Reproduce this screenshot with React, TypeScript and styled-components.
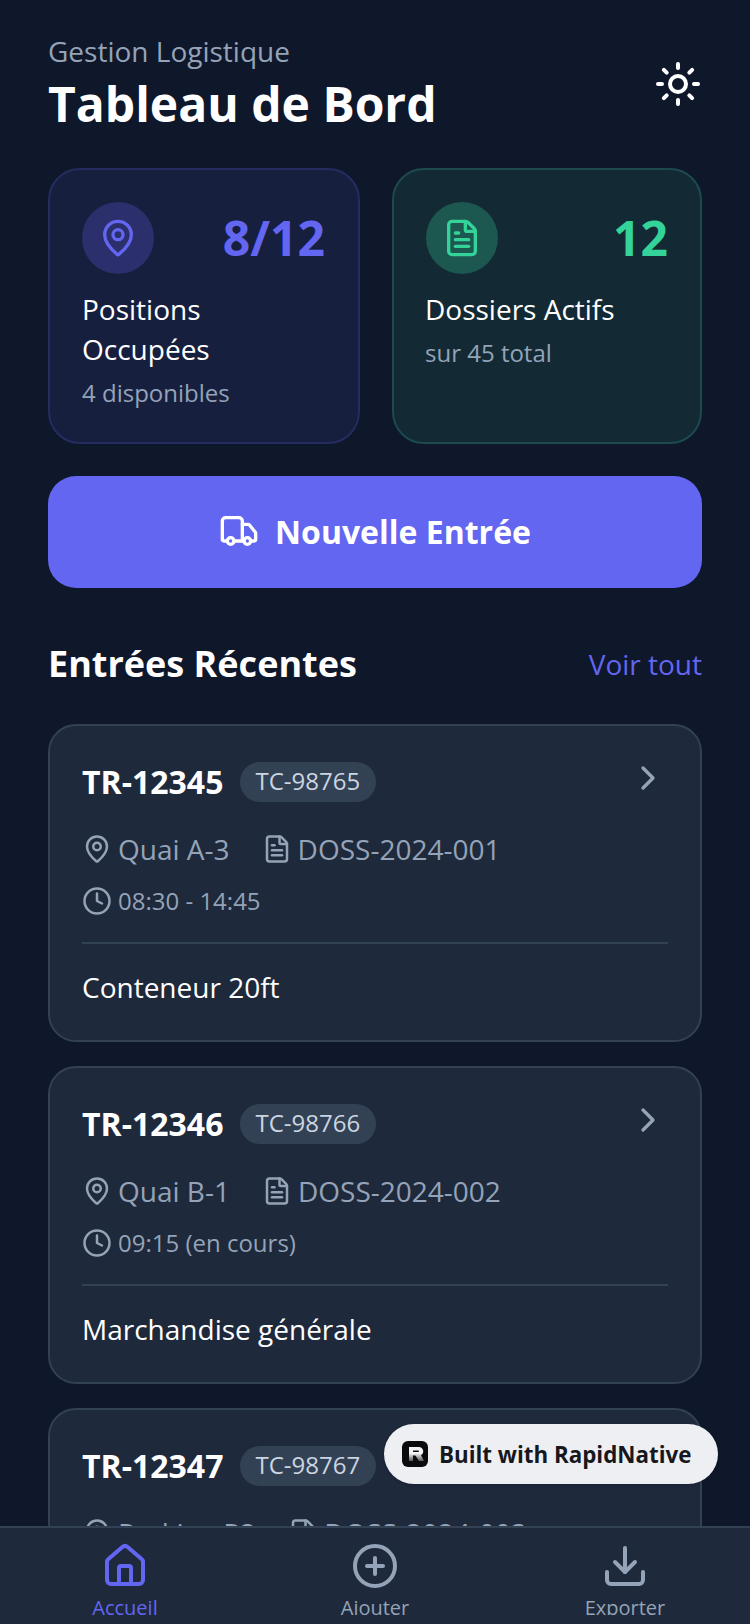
import React from 'react';
import styled, { createGlobalStyle } from 'styled-components';
import { ChevronRight, CirclePlus, Clock, Download, FileText, House, MapPin, Sun, Truck } from 'lucide-react';

type Entry = {
  truck: string,
  container: string,
  place: string,
  file: string,
  time: string,
  cargo: string,
}

const entries: Entry[] = [
  { truck: 'TR-12345', container: 'TC-98765', place: 'Quai A-3', file: 'DOSS-2024-001', time: '08:30 - 14:45', cargo: 'Conteneur 20ft' },
  { truck: 'TR-12346', container: 'TC-98766', place: 'Quai B-1', file: 'DOSS-2024-002', time: '09:15 (en cours)', cargo: 'Marchandise générale' },
  { truck: 'TR-12347', container: 'TC-98767', place: 'Parking P2', file: 'DOSS-2024-003', time: '10:00 (en cours)', cargo: 'Conteneur 40ft' },
];

const GlobalStyle = createGlobalStyle`
  html, body {
    margin: 0;
    padding: 0;
    background: #0f172a;
  }
  * {
    box-sizing: border-box;
  }
`;

const Screen = styled.div`
  position: relative;
  display: flex;
  flex-direction: column;
  width: 750px;
  height: 1624px;
  overflow: hidden;
  background: #0f172a;
  color: #fff;
  font-family: "Open Sans", "Noto Sans", sans-serif;
`;

const Content = styled.div`
  flex: 1;
  min-height: 0;
  overflow: hidden;
  padding: 31px 48px 0;
`;

const Header = styled.div`
  display: flex;
  justify-content: space-between;
  align-items: center;
  margin-bottom: 32px;
`;

const Subtitle = styled.div`
  margin-bottom: 1px;
  font-size: 28px;
  line-height: 40px;
  color: #94a3b8;
`;

const Title = styled.h1`
  margin: 0;
  font-size: 48px;
  line-height: 64px;
  font-weight: 700;
`;

const Stats = styled.div`
  display: grid;
  grid-template-columns: 312px 310px;
  gap: 32px;
  margin-bottom: 32px;
`;

const StatCard = styled.div<{ $tone: 'indigo' | 'green' }>`
  height: 276px;
  padding: 32px;
  padding-left: ${props => props.$tone === 'indigo' ? 32 : 31}px;
  border-radius: 32px;
  border: 2px solid ${props => props.$tone === 'indigo' ? '#262c5f' : '#1c4a4e'};
  background: ${props => props.$tone === 'indigo' ? '#171f3f' : '#132a35'};
`;

const StatTop = styled.div`
  display: flex;
  justify-content: space-between;
  align-items: center;
  margin-bottom: 15px;
`;

const StatIcon = styled.div<{ $tone: 'indigo' | 'green' }>`
  display: flex;
  align-items: center;
  justify-content: center;
  width: 72px;
  height: 72px;
  margin-left: ${props => props.$tone === 'indigo' ? 0 : 1}px;
  border-radius: 50%;
  background: ${props => props.$tone === 'indigo' ? '#2b2f6b' : '#1c5750'};
  color: ${props => props.$tone === 'indigo' ? '#6366f1' : '#34d399'};
`;

const StatValue = styled.div<{ $tone: 'indigo' | 'green' }>`
  margin-right: ${props => props.$tone === 'indigo' ? 1 : 0}px;
  font-size: 48px;
  line-height: 64px;
  font-weight: 700;
  color: ${props => props.$tone === 'indigo' ? '#6366f1' : '#34d399'};
`;

const StatLabel = styled.div`
  font-size: 28px;
  line-height: 40px;
`;

const StatNote = styled.div`
  margin-top: 8px;
  font-size: 24px;
  line-height: 32px;
  color: #94a3b8;
`;

const PrimaryButton = styled.button`
  display: flex;
  align-items: center;
  justify-content: center;
  gap: 16px;
  width: 100%;
  height: 112px;
  margin-bottom: 48px;
  padding: 0 0 2px;
  border: 0;
  border-radius: 28px;
  background: #6366f1;
  color: #fff;
  font-family: inherit;
  font-size: 32px;
  font-weight: 700;
`;

const SectionHead = styled.div`
  display: flex;
  justify-content: space-between;
  align-items: center;
  margin-bottom: 32px;
`;

const SectionTitle = styled.h2`
  margin: 0;
  font-size: 36px;
  line-height: 56px;
  font-weight: 700;
`;

const SeeAll = styled.span`
  font-size: 28px;
  line-height: 40px;
  color: #6366f1;
`;

const EntryList = styled.div`
  display: flex;
  flex-direction: column;
  gap: 24px;
`;

const EntryCard = styled.div`
  height: 318px;
  padding: 32px;
  border: 2px solid #334155;
  border-radius: 28px;
  background: #1e293b;
`;

const EntryTop = styled.div`
  display: flex;
  justify-content: space-between;
  align-items: flex-start;
  margin-bottom: 23px;
`;

const EntryIds = styled.div`
  display: flex;
  align-items: center;
  gap: 17px;
  height: 48px;
`;

const TruckId = styled.span`
  font-size: 32px;
  line-height: 44px;
  font-weight: 700;
`;

const ContainerTag = styled.span`
  padding: 0 16px 0 15px;
  height: 40px;
  border-radius: 20px;
  background: #334155;
  font-size: 24px;
  line-height: 38px;
  color: #cbd5e1;
`;

const Chevron = styled.div`
  display: flex;
  color: #94a3b8;
`;

const MetaRow = styled.div`
  display: flex;
  align-items: center;
  gap: 32px;
  margin-bottom: 12px;
`;

const MetaItem = styled.div<{ $small?: boolean }>`
  display: flex;
  align-items: center;
  gap: 6px;
  font-size: ${props => props.$small ? 24 : 28}px;
  line-height: 40px;
  color: #94a3b8;
`;

const CardFooter = styled.div`
  margin-top: 21px;
  padding-top: 23px;
  border-top: 2px solid #334155;
  font-size: 28px;
  line-height: 40px;
`;

const TabBar = styled.nav`
  display: grid;
  grid-template-columns: repeat(3, 1fr);
  flex: none;
  height: 98px;
  padding-top: 14px;
  background: #1e293b;
  border-top: 2px solid #334155;
`;

const Tab = styled.div<{ $active?: boolean }>`
  display: flex;
  flex-direction: column;
  align-items: center;
  height: 73px;
  overflow: hidden;
  color: ${props => props.$active ? '#6366f1' : '#94a3b8'};
  font-size: 20px;
  line-height: 28px;

  & svg {
    flex: none;
  }
`;

const TabLabel = styled.span`
  margin-top: 4px;
`;

const BuiltBadge = styled.div`
  position: absolute;
  left: 384px;
  top: 1424px;
  display: flex;
  align-items: center;
  gap: 11px;
  width: 334px;
  height: 60px;
  padding-left: 18px;
  border-radius: 30px;
  background: #eeeff2;
  color: #16181d;
  font-size: 22.35px;
  font-weight: 700;
  box-shadow: 0 1px 3px rgba(15, 23, 42, 0.4);
`;

const BadgeLogo = styled.svg`
  flex: none;
`;

const App = () => {
  return (
    <Screen>
      <GlobalStyle />
      <Content>
        <Header>
          <div>
            <Subtitle>Gestion Logistique</Subtitle>
            <Title>Tableau de Bord</Title>
          </div>
          <Sun size={48} color="#fff" strokeWidth={2} />
        </Header>
        <Stats>
          <StatCard $tone="indigo">
            <StatTop>
              <StatIcon $tone="indigo"><MapPin size={40} strokeWidth={2} /></StatIcon>
              <StatValue $tone="indigo">8/12</StatValue>
            </StatTop>
            <StatLabel>Positions Occupées</StatLabel>
            <StatNote>4 disponibles</StatNote>
          </StatCard>
          <StatCard $tone="green">
            <StatTop>
              <StatIcon $tone="green"><FileText size={40} strokeWidth={2} /></StatIcon>
              <StatValue $tone="green">12</StatValue>
            </StatTop>
            <StatLabel>Dossiers Actifs</StatLabel>
            <StatNote>sur 45 total</StatNote>
          </StatCard>
        </Stats>
        <PrimaryButton>
          <Truck size={40} strokeWidth={2} />
          Nouvelle Entrée
        </PrimaryButton>
        <SectionHead>
          <SectionTitle>Entrées Récentes</SectionTitle>
          <SeeAll>Voir tout</SeeAll>
        </SectionHead>
        <EntryList>
          {entries.map(entry => (
            <EntryCard key={entry.truck}>
              <EntryTop>
                <EntryIds>
                  <TruckId>{entry.truck}</TruckId>
                  <ContainerTag>{entry.container}</ContainerTag>
                </EntryIds>
                <Chevron><ChevronRight size={40} strokeWidth={2} /></Chevron>
              </EntryTop>
              <MetaRow>
                <MetaItem><MapPin size={30} strokeWidth={2} />{entry.place}</MetaItem>
                <MetaItem><FileText size={30} strokeWidth={2} />{entry.file}</MetaItem>
              </MetaRow>
              <MetaRow>
                <MetaItem $small><Clock size={30} strokeWidth={2} />{entry.time}</MetaItem>
              </MetaRow>
              <CardFooter>{entry.cargo}</CardFooter>
            </EntryCard>
          ))}
        </EntryList>
      </Content>
      <TabBar>
        <Tab $active><House size={48} strokeWidth={2} /><TabLabel>Accueil</TabLabel></Tab>
        <Tab><CirclePlus size={48} strokeWidth={2} /><TabLabel>Ajouter</TabLabel></Tab>
        <Tab><Download size={48} strokeWidth={2} /><TabLabel>Exporter</TabLabel></Tab>
      </TabBar>
      <BuiltBadge>
        <BadgeLogo width="26" height="26" viewBox="0 0 26 26">
          <defs>
            <linearGradient id="badge-r" x1="0" y1="0" x2="0" y2="1">
              <stop offset="0.45" stopColor="#f4f4f6" />
              <stop offset="1" stopColor="#55555a" />
            </linearGradient>
          </defs>
          <rect width="26" height="26" rx="6" fill="#0b0b0d" />
          <path d="M7 6h10a4.4 4.4 0 0 1 2 8.2L22 20h-5l-3.6-5.6H11V20H7zM11 9.4V11h5.2a0.8 0.8 0 0 0 0-1.6z" fill="url(#badge-r)" fillRule="evenodd" />
        </BadgeLogo>
        Built with RapidNative
      </BuiltBadge>
    </Screen>
  );
};

export default App;
